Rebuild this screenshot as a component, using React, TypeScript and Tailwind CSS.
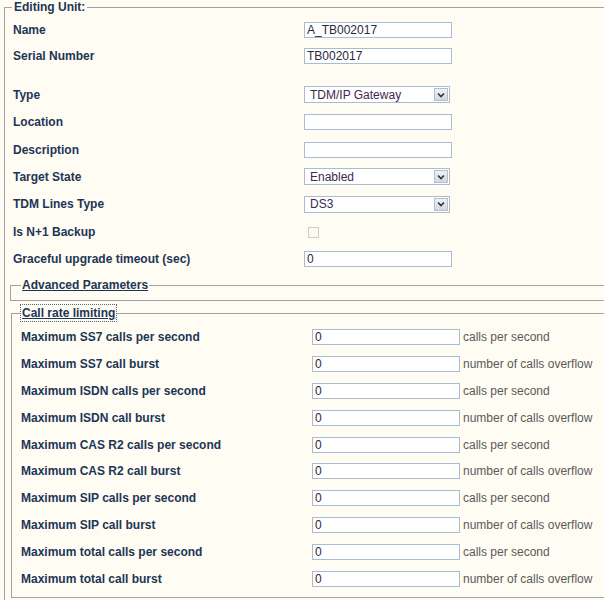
import React from "react";

const labelCls = "text-[12px] font-bold text-[#1c3656] leading-[14px]";

function TextBox({ value, w = "w-[148px]" }: { value: string; w?: string }) {
  return (
    <div className={`${w} h-[16px] border border-[#a9bdd2] bg-white text-[12px] leading-[14px] pl-[2px] text-[#2a2a3a] overflow-hidden whitespace-nowrap`}>
      {value}
    </div>
  );
}

function SelectBox({ value }: { value: string }) {
  return (
    <div className="w-[146px] h-[17px] border border-[#a9bdd2] bg-white flex items-center justify-between">
      <span className="text-[12px] leading-[14px] pl-[5px] text-[#40284e]">{value}</span>
      <span className="w-[14px] h-[13px] mr-[1px] border border-[#b4bfcc] bg-gradient-to-b from-[#eef1f5] to-[#d3d9e1] flex items-center justify-center">
        <svg width="8" height="6" viewBox="0 0 8 6">
          <path d="M1 1.5 L4 4.5 L7 1.5" fill="none" stroke="#2b3440" strokeWidth="1.6" />
        </svg>
      </span>
    </div>
  );
}

function Row({ label, children, h = "h-[27px]" }: { label: string; children?: React.ReactNode; h?: string }) {
  return (
    <div className={`flex items-center ${h}`}>
      <div className={`w-[291px] shrink-0 ${labelCls}`}>{label}</div>
      <div className="flex items-center">{children}</div>
    </div>
  );
}

const rateRows: [string, string][] = [
  ["Maximum SS7 calls per second", "calls per second"],
  ["Maximum SS7 call burst", "number of calls overflow"],
  ["Maximum ISDN calls per second", "calls per second"],
  ["Maximum ISDN call burst", "number of calls overflow"],
  ["Maximum CAS R2 calls per second", "calls per second"],
  ["Maximum CAS R2 call burst", "number of calls overflow"],
  ["Maximum SIP calls per second", "calls per second"],
  ["Maximum SIP call burst", "number of calls overflow"],
  ["Maximum total calls per second", "calls per second"],
  ["Maximum total call burst", "number of calls overflow"],
];

export default function App() {
  return (
    <div className="w-[604px] h-[600px] overflow-hidden bg-[#fffcf3] font-['Liberation_Sans',Arial,sans-serif]">
      <div className="pl-[4px]">
        <fieldset className="w-[640px] border border-[#a3a3a3] pb-[10px]">
          <legend className={`ml-[7px] px-[2px] ${labelCls}`}>Editing Unit:</legend>
          <div className="pl-[8px] pt-[3px]">
            <Row label="Name" h="h-[26px]"><TextBox value="A_TB002017" /></Row>
            <Row label="Serial Number" h="h-[26px]"><TextBox value="TB002017" /></Row>
            <div className="h-[12px]" />
            <Row label="Type"><SelectBox value="TDM/IP Gateway" /></Row>
            <Row label="Location" h="h-[28px]"><TextBox value="" /></Row>
            <Row label="Description"><TextBox value="" /></Row>
            <Row label="Target State"><SelectBox value="Enabled" /></Row>
            <Row label="TDM Lines Type" h="h-[28px]"><SelectBox value="DS3" /></Row>
            <Row label="Is N+1 Backup" h="h-[28px]">
              <div className="ml-[4px] w-[11px] h-[11px] border border-[#cfcdc4] bg-[#fbfaf6]" />
            </Row>
            <Row label="Graceful upgrade timeout (sec)" h="h-[26px]"><TextBox value="0" /></Row>
          </div>

          <div className="pl-[5px] pt-[6px]">
            <fieldset className="border border-[#a3a3a3] h-[23px]">
              <legend className={`ml-[10px] px-[1px] ${labelCls} underline`}>Advanced Parameters</legend>
            </fieldset>
          </div>

          <div className="pl-[6px] pt-[4px]">
            <fieldset className="border border-[#a3a3a3] pb-[5px]">
              <legend className={`ml-[9px] px-[1px] py-[1px] ${labelCls} underline outline outline-1 outline-dotted outline-[#556677]`}>
                Call rate limiting
              </legend>
              <div className="pl-[9px] pt-[3px]">
                {rateRows.map(([label, unit]) => (
                  <Row key={label} label={label} h="h-[26.8px]">
                    <TextBox value="0" />
                    <span className="ml-[3px] text-[12px] leading-[14px] text-[#5a5a5a]">{unit}</span>
                  </Row>
                ))}
              </div>
            </fieldset>
          </div>
        </fieldset>
      </div>
    </div>
  );
}
